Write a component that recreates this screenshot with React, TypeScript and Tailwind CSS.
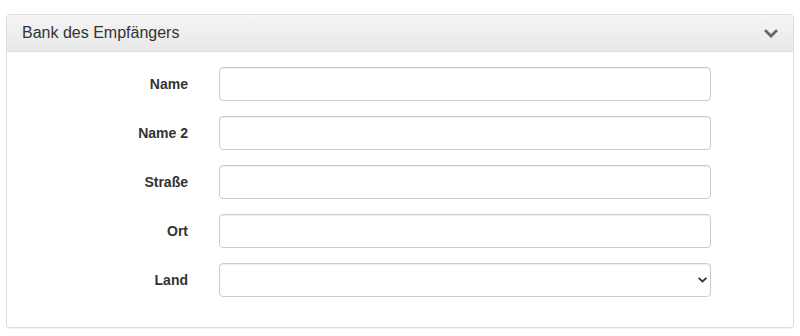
import React from 'react'

const fields = ['Name', 'Name 2', 'Straße', 'Ort']

function Chevron({ className }: { className?: string }) {
  return (
    <svg viewBox="0 0 16 10" className={className} fill="currentColor" aria-hidden="true">
      <path d="M0 2.2 2.2 0 8 5.6 13.8 0 16 2.2 8 10z" />
    </svg>
  )
}

export default function App() {
  return (
    <div className="min-h-[336px] bg-white pt-[14px] px-[6px] font-['Liberation_Sans',Arial,sans-serif] text-[#333]">
      <div className="w-[788px] rounded-[4px] border border-[#ddd] bg-white shadow-[0_1px_1px_rgba(0,0,0,0.05)]">
        <div className="flex h-[37px] items-center justify-between rounded-t-[3px] border-b border-[#ddd] bg-gradient-to-b from-[#f5f5f5] to-[#e8e8e8] px-[15px]">
          <h3 className="text-[16px] leading-[1.1]">Bank des Empfängers</h3>
          <Chevron className="h-[9px] w-[14px] text-[#666]" />
        </div>

        <div className="p-[15px]">
          {fields.map((f) => (
            <div key={f} className="mb-[15px] flex">
              <label className="w-[166px] pt-[7px] text-right text-[14px] font-bold leading-[20px]">
                {f}
              </label>
              <input
                type="text"
                className="ml-[31px] h-[34px] w-[492px] rounded-[4px] border border-[#ccc] bg-white px-3 text-[14px] shadow-[inset_0_1px_1px_rgba(0,0,0,0.075)] outline-none"
              />
            </div>
          ))}
          <div className="mb-[15px] flex">
            <label className="w-[166px] pt-[7px] text-right text-[14px] font-bold leading-[20px]">
              Land
            </label>
            <div className="relative ml-[31px] w-[492px]">
              <select className="h-[34px] w-full appearance-none rounded-[4px] border border-[#ccc] bg-white px-3 text-[14px] shadow-[inset_0_1px_1px_rgba(0,0,0,0.075)] outline-none">
                <option></option>
              </select>
              <Chevron className="pointer-events-none absolute right-[4px] top-[14px] h-[6px] w-[9px] text-[#333]" />
            </div>
          </div>
        </div>
      </div>
    </div>
  )
}
